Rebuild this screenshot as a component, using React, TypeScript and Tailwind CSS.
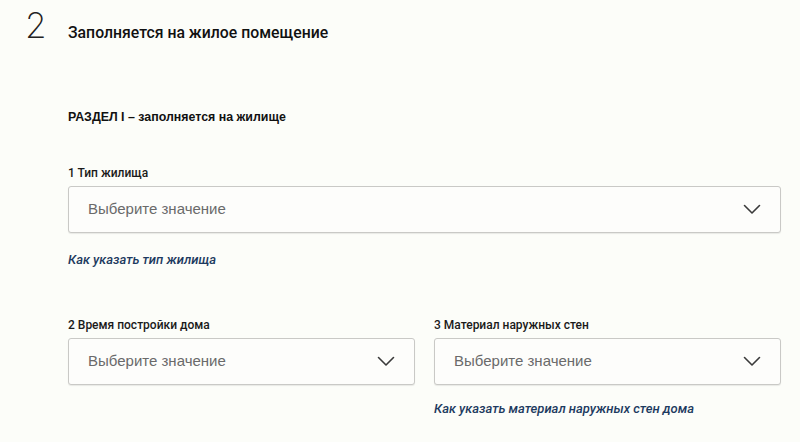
import React from 'react';

const Chevron: React.FC = () => (
  <svg width="18" height="11" viewBox="0 0 18 11" fill="none" className="shrink-0">
    <path d="M1.5 1.5 L9 9 L16.5 1.5" stroke="#3a3a3a" strokeWidth="1.6" strokeLinecap="round" strokeLinejoin="round" />
  </svg>
);

const Select: React.FC = () => (
  <div className="h-[47px] flex items-center justify-between pl-[19px] pr-[19px] border border-[#c9c9c6] rounded-[3px] bg-[#fdfdfb] shadow-[0_1px_1px_rgba(0,0,0,0.08)]">
    <span className="text-[15px] text-[#6a6a6a] font-['Liberation_Sans',Arial,sans-serif]">Выберите значение</span>
    <Chevron />
  </div>
);

const Label: React.FC<{ children: React.ReactNode }> = ({ children }) => (
  <div className="text-[12px] leading-[14px] font-medium text-[#1a1a1a] font-['Roboto',Arial,sans-serif] mb-[6px]">{children}</div>
);

const HelpLink: React.FC<{ children: React.ReactNode }> = ({ children }) => (
  <a className="block text-[13px] leading-[15px] italic font-medium text-[#1d3a60] font-['Roboto',Arial,sans-serif] cursor-pointer">{children}</a>
);

export default function App() {
  return (
    <div className="w-[800px] h-[442px] overflow-hidden bg-[#fcfdf9]">
      <div className="flex items-baseline pl-[25px] pt-[5px]">
        <span className="w-[43px] text-[35px] leading-[40px] font-extralight text-[#222] font-['Inter',sans-serif]">2</span>
        <h1 className="text-[15.8px] font-medium text-[#111] font-['Roboto',Arial,sans-serif]">Заполняется на жилое помещение</h1>
      </div>

      <div className="pl-[68px] pr-[19px]">
        <h2 className="mt-[65px] text-[12.4px] leading-[14px] font-bold text-[#111] font-['Liberation_Sans',Arial,sans-serif]">
          РАЗДЕЛ I – заполняется на жилище
        </h2>

        <div className="mt-[42px]">
          <Label>1 Тип жилища</Label>
          <Select />
          <div className="mt-[19px]">
            <HelpLink>Как указать тип жилища</HelpLink>
          </div>
        </div>

        <div className="mt-[51px] grid grid-cols-2 gap-x-[19px]">
          <div>
            <Label>2 Время постройки дома</Label>
            <Select />
          </div>
          <div>
            <Label>3 Материал наружных стен</Label>
            <Select />
            <div className="mt-[16px]">
              <HelpLink>Как указать материал наружных стен дома</HelpLink>
            </div>
          </div>
        </div>
      </div>
    </div>
  );
}
